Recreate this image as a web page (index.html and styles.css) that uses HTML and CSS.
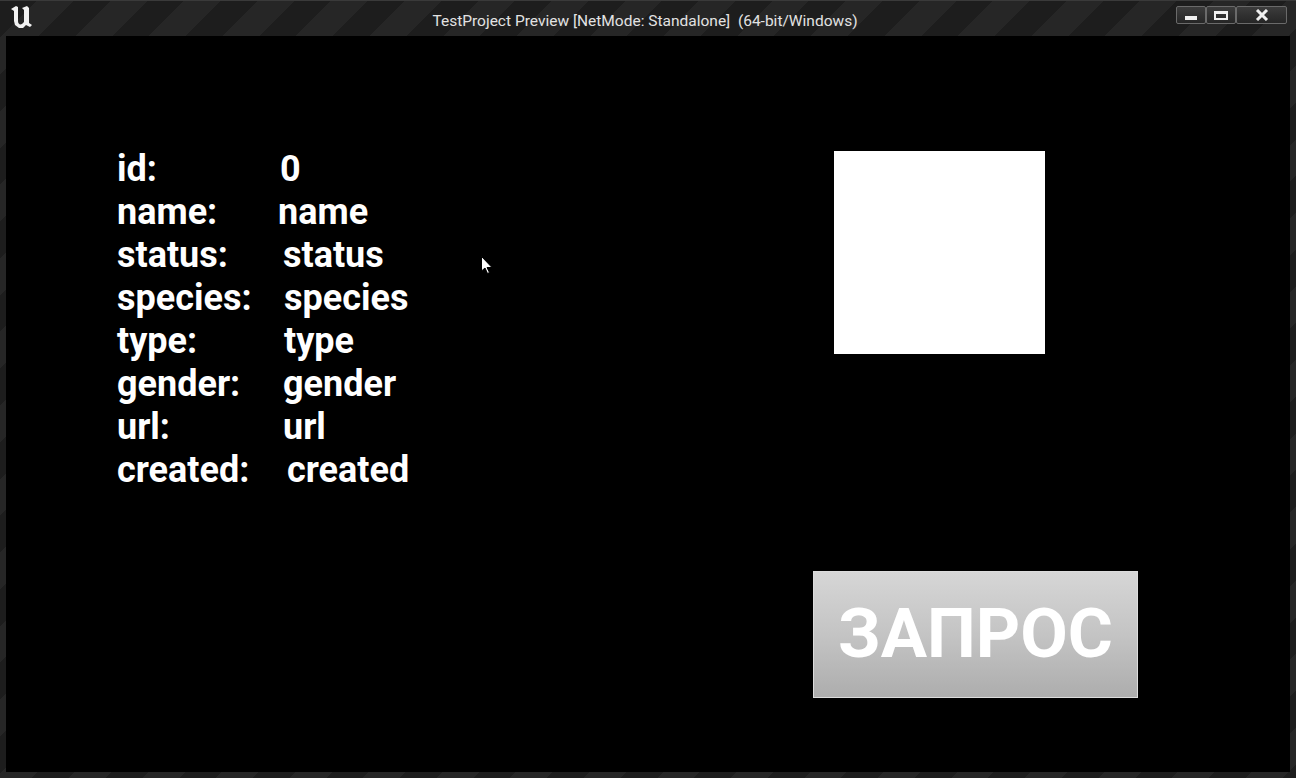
FILE: index.html
```html
<!DOCTYPE html>
<html>
<head>
<meta charset="utf-8">
<link rel="stylesheet" href="styles.css">
</head>
<body>
<div class="window">
  <div class="titlebar">
    <svg class="logo" width="26" height="26" viewBox="0 0 26 26">
      <path d="M3 5 L8 2 L10 3 L10 17 C10 20 12 21 14 20 L16 18 L16 6 L14 4 L19 2 L21 4 L21 19 L24 21 L22 23 L18 21 L15 24 L11 24 L7 21 L6 17 L6 7 Z" fill="#f2f2f2"/>
    </svg>
    <div class="title">TestProject Preview [NetMode: Standalone]&nbsp; (64-bit/Windows)</div>
    <div class="controls">
      <div class="ctl ctl-min"><span class="min-bar"></span></div>
      <div class="ctl ctl-max"><span class="max-box"></span></div>
      <div class="ctl ctl-close">
        <svg width="14" height="12" viewBox="0 0 14 12"><path d="M2 1 L12 11 M12 1 L2 11" stroke="#f0f0f0" stroke-width="3"/></svg>
      </div>
    </div>
  </div>
  <div class="viewport">
    <div class="info">
      <div class="label">id:</div><div class="value v-id">0</div>
      <div class="label">name:</div><div class="value v-name">name</div>
      <div class="label">status:</div><div class="value">status</div>
      <div class="label">species:</div><div class="value v-plus1">species</div>
      <div class="label">type:</div><div class="value v-plus1">type</div>
      <div class="label">gender:</div><div class="value">gender</div>
      <div class="label">url:</div><div class="value">url</div>
      <div class="label">created:</div><div class="value v-created">created</div>
    </div>
    <div class="side">
      <div class="image-box"></div>
      <div class="request-btn">ЗАПРОС</div>
    </div>
    <svg class="cursor" width="13" height="20" viewBox="0 0 13 20">
      <path d="M0.5 0.5 L0.5 15 L4 12 L6.5 17.5 L8.5 16.5 L6 11.5 L11 11.5 Z" fill="#ffffff" stroke="#000" stroke-width="1"/>
    </svg>
  </div>
</div>
</body>
</html>
```

FILE: styles.css
```css
html, body {
  margin: 0;
  padding: 0;
  background: #1c1c1c;
}
.window {
  width: 1296px;
  height: 778px;
  display: flex;
  flex-direction: column;
  box-sizing: border-box;
  border-top: 1px solid #3a3a3a;
  background: repeating-linear-gradient(135deg, #1d1d1d 0px, #1d1d1d 26px, #262626 26px, #262626 52px);
  padding: 0 6px 6px 6px;
}
.titlebar {
  height: 35px;
  display: flex;
  align-items: center;
  position: relative;
  flex: none;
}
.logo {
  margin-left: 2px;
  margin-top: -3px;
}
.title {
  position: absolute;
  left: 0;
  right: 0;
  top: 11px;
  text-align: center;
  font-family: Roboto, "Liberation Sans", sans-serif;
  font-size: 15.5px;
  color: #e2e2e2;
  margin-left: -6px;
}
.controls {
  margin-left: auto;
  margin-right: 3px;
  margin-top: -7px;
  display: flex;
  position: relative;
}
.ctl {
  height: 18px;
  box-sizing: border-box;
  border: 1px solid #6a6a6a;
  background: linear-gradient(#3c3c3c, #262626);
  display: flex;
  align-items: center;
  justify-content: center;
  border-radius: 2px;
}
.ctl-min { width: 30px; }
.ctl-max { width: 30px; }
.ctl-close { width: 51px; }
.min-bar {
  width: 12px;
  height: 4px;
  background: #f0f0f0;
  margin-top: 5px;
}
.max-box {
  width: 14px;
  height: 9px;
  box-sizing: border-box;
  border: 2px solid #f0f0f0;
  border-top-width: 3px;
}
.viewport {
  flex: 1;
  background: #000;
  position: relative;
  display: flex;
  padding: 112px 0 0 111px;
  box-sizing: border-box;
}
.info {
  width: 696px;
  flex: none;
  display: grid;
  grid-template-columns: 166px auto;
  grid-auto-rows: 43px;
  align-content: start;
  font-family: Roboto, "Liberation Sans", sans-serif;
  font-weight: 700;
  font-size: 36px;
  line-height: 43px;
  color: #ffffff;
}
.value { white-space: nowrap; }
.v-id { margin-left: -3px; }
.v-name { margin-left: -5px; }
.v-plus1 { margin-left: 1px; }
.v-created { margin-left: 4px; }
.side {
  padding-top: 3px;
  display: flex;
  flex-direction: column;
}
.image-box {
  width: 211px;
  height: 203px;
  background: #ffffff;
  margin-left: 21px;
}
.request-btn {
  margin-top: 217px;
  width: 325px;
  height: 127px;
  box-sizing: border-box;
  border: 1px solid #dcdcdc;
  background: linear-gradient(#d6d6d6, #c4c4c4 50%, #adadad);
  display: flex;
  align-items: center;
  justify-content: center;
  font-family: Roboto, "Liberation Sans", sans-serif;
  font-weight: 700;
  font-size: 69px;
  color: #ffffff;
  padding-bottom: 2px;
}
.cursor {
  position: absolute;
  left: 475px;
  top: 220px;
}
```
